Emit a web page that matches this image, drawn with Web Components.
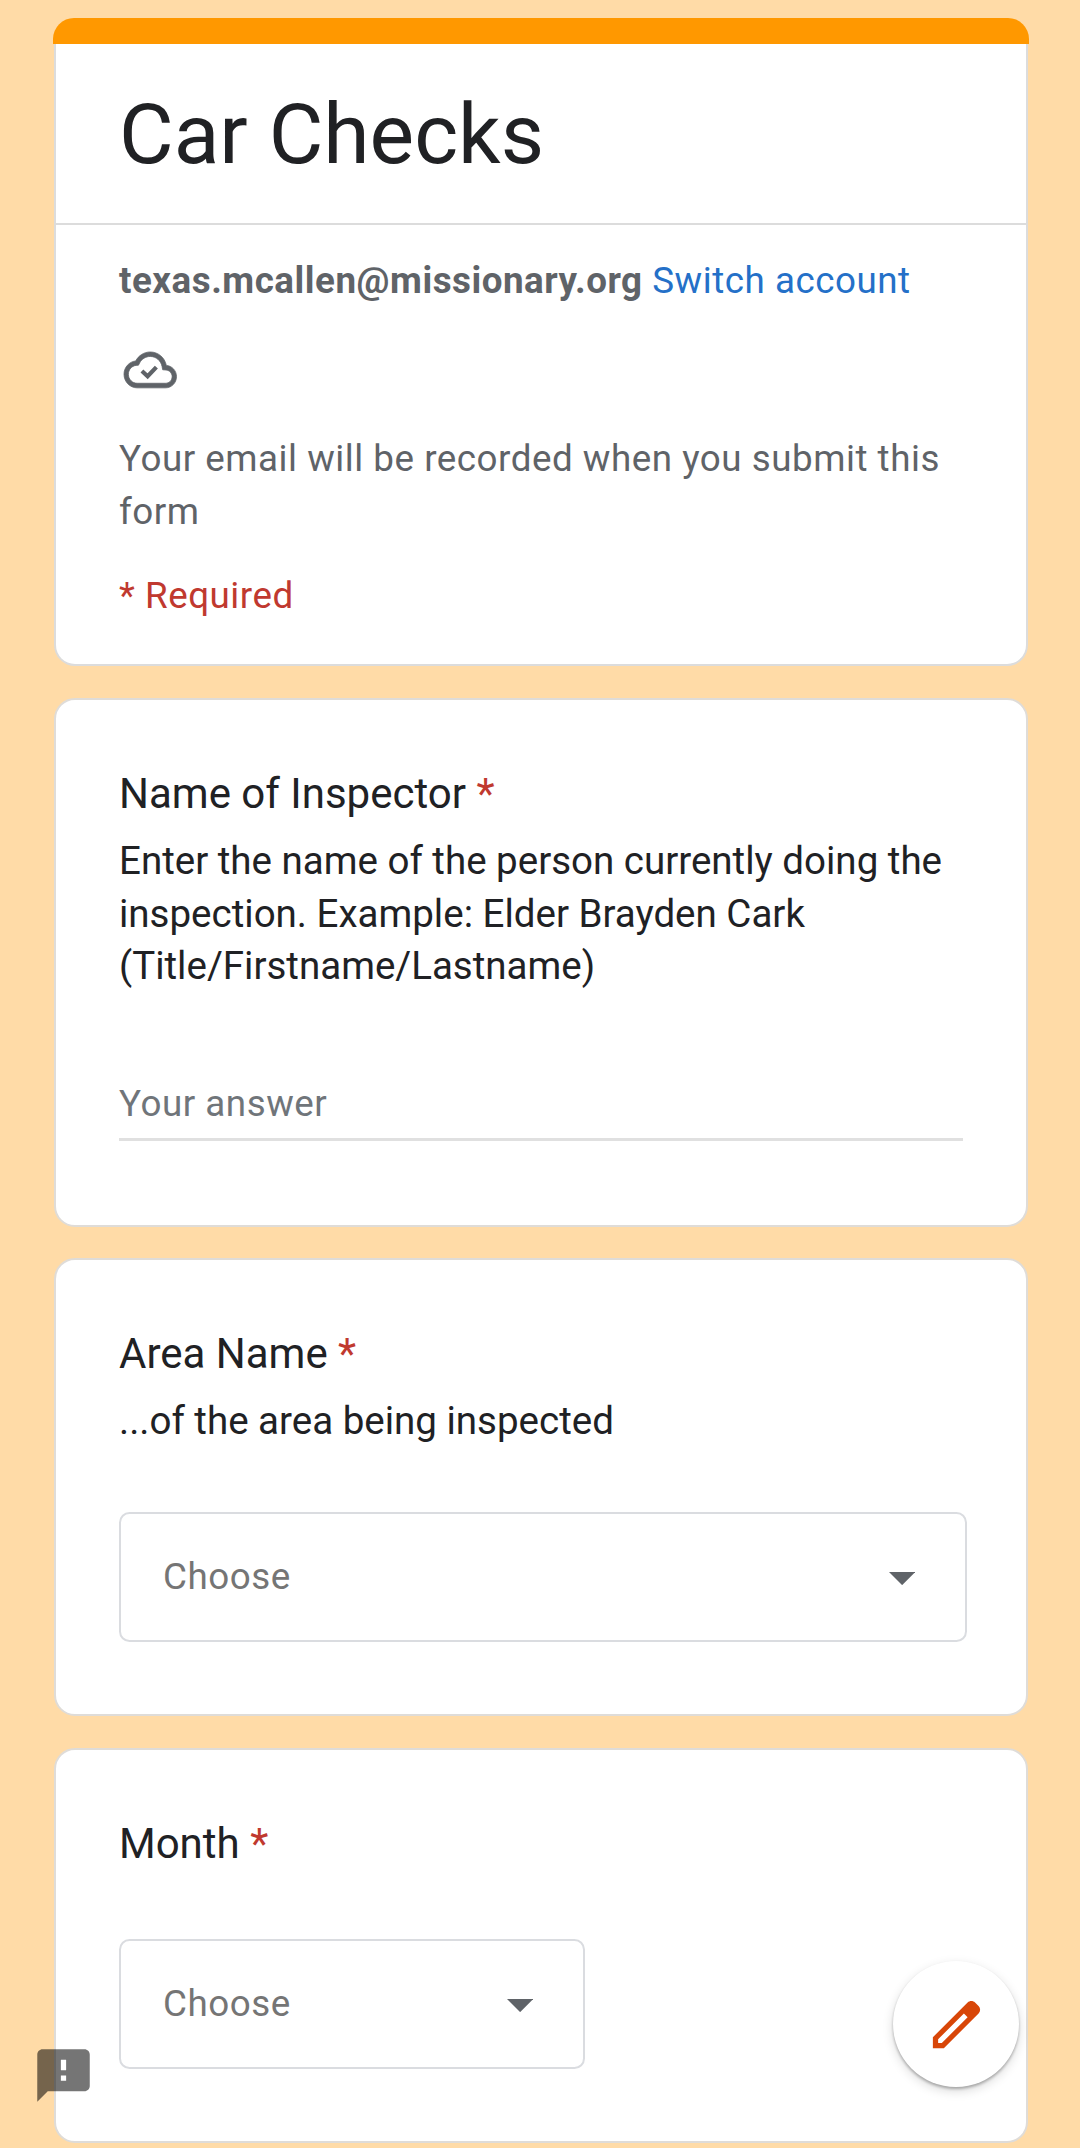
<!DOCTYPE html>
<html lang="en">
<head>
<meta charset="utf-8">
<title>Car Checks</title>
<style>
  html, body { margin: 0; height: 100%; overflow: hidden; }
  body { background: #ffdba7; font-family: Roboto, "Liberation Sans", sans-serif; color: #202124; }
</style>
</head>
<body>
<form-page>
  <form-header heading="Car Checks" email="texas.mcallen@missionary.org" action="Switch account" required-note="* Required">Your email will be recorded when you submit this form</form-header>
  <question-card style="height:529px" heading="Name of Inspector">
    <span slot="description">Enter the name of the person currently doing the inspection. Example: Elder Brayden Cark (Title/Firstname/Lastname)</span>
    <text-answer placeholder="Your answer"></text-answer>
  </question-card>
  <question-card style="height:458px;margin-top:-1px" heading="Area Name">
    <span slot="description">...of the area being inspected</span>
    <drop-down label="Choose" style="width:848px;margin-top:64.4px"></drop-down>
  </question-card>
  <question-card style="height:395px" heading="Month">
    <drop-down label="Choose" style="width:466px;margin-top:64px"></drop-down>
  </question-card>
</form-page>
<feedback-button></feedback-button>
<edit-fab></edit-fab>
<script>
  const define = (name, html) => customElements.define(name, class extends HTMLElement {
    constructor() {
      super();
      const t = document.createElement('template');
      t.innerHTML = html;
      this.attachShadow({ mode: 'open' }).appendChild(t.content.cloneNode(true));
    }
    connectedCallback() {
      this.shadowRoot.querySelectorAll('[data-attr]').forEach(el => {
        el.textContent = this.getAttribute(el.dataset.attr) || '';
      });
    }
  });

  define('form-page', `
    <style>
      :host { display: flex; flex-direction: column; gap: 32px; padding: 18px 52px 0 54px; box-sizing: border-box; }
    </style>
    <slot></slot>`);

  define('form-header', `
    <style>
      :host { display: block; height: 648px; box-sizing: border-box; font-size: 36.75px; line-height: 52.5px; letter-spacing: .525px; color: #5f6368; }
      .bar { height: 26px; margin: 0 -1px; background: #ff9800; border-radius: 21px 21px 0 0; }
      .body { height: 622px; box-sizing: border-box; background: #fff; border: 2px solid #dcdcdc; border-top: 0; border-radius: 0 0 21px 21px; }
      h1 { margin: 0; height: 179px; box-sizing: border-box; padding: 34px 63px 0; font-size: 84px; font-weight: 400; line-height: 113px; letter-spacing: 0; color: #202124; }
      .info { border-top: 2px solid #dcdcdc; padding: 30px 63px 0; }
      .account { white-space: nowrap; }
      b { font-weight: 700; }
      a { color: #2470c8; }
      svg { display: block; width: 52.5px; height: 52.5px; margin: 35.5px 0 37.5px 5px; fill: #5f6368; stroke: #5f6368; overflow: visible; }
      .req { margin-top: 32px; color: #c0392f; }
    </style>
    <div class="bar"></div>
    <div class="body">
      <h1 data-attr="heading"></h1>
      <div class="info">
        <div class="account"><b data-attr="email"></b> <a data-attr="action"></a></div>
        <svg viewBox="0 0 24 24"><path stroke-width=".35" d="M19.350 10.250C18.670 6.700 15.640 4.100 12 4.100 9.110 4.100 6.600 5.800 5.350 8.200 2.340 8.550 0 11.100 0 14.300c0 3.400 2.690 6.200 6 6.200h13c2.760 0 5-2.300 5-5.150 0-2.700-2.050-4.900-4.650-5.100zM19 18.400H6c-2.210 0-4-1.840-4-4.100 0-2.100 1.530-3.850 3.560-4.070l1.070-.11.5-.98C8.080 7.300 9.940 6.150 12 6.150c2.620 0 4.880 1.900 5.390 4.550l.3 1.540 1.530.11c1.560.1 2.780 1.450 2.780 3.030 0 1.700-1.350 3.020-3 3.020z"/><path fill="none" stroke-width="1.9" d="M8.200 12.800l2.600 2.400 4-4.200"/></svg>
        <div><slot></slot></div>
        <div class="req" data-attr="required-note"></div>
      </div>
    </div>`);

  define('question-card', `
    <style>
      :host { display: block; box-sizing: border-box; background: #fff; border: 2px solid #dfdcd8; border-radius: 21px; padding: 62px 63px 0; }
      h2 { margin: 0 0 10.1px; font-size: 42px; font-weight: 400; line-height: 63px; letter-spacing: 0; }
      i { font-style: normal; color: #c0392f; }
      .desc { font-size: 38.5px; line-height: 52.5px; }
    </style>
    <h2><span data-attr="heading"></span> <i>*</i></h2>
    <div class="desc"><slot name="description"></slot></div>
    <slot></slot>`);

  define('text-answer', `
    <style>
      :host { display: flex; align-items: flex-end; box-sizing: border-box; width: 844px; height: 148.4px; padding-bottom: 3px; border-bottom: 3px solid #e0e0e0; color: #70757a; font-size: 36.75px; line-height: 63px; letter-spacing: .525px; }
    </style>
    <span data-attr="placeholder"></span>`);

  define('drop-down', `
    <style>
      :host { display: flex; align-items: center; justify-content: space-between; box-sizing: border-box; height: 130px; border: 2px solid #dadce0; border-radius: 10.5px; padding: 0 50px 0 42px; color: #757575; font-size: 36.75px; line-height: 52.5px; letter-spacing: .525px; }
      svg { width: 26.25px; height: 13.125px; fill: #5f6368; margin-top: 2.5px; }
    </style>
    <span data-attr="label"></span>
    <svg viewBox="0 0 10 5"><path d="M0 0h10L5 5z"/></svg>`);

  define('feedback-button', `
    <style>
      :host { position: fixed; left: 32px; top: 2044px; width: 63px; height: 63px; }
      svg { display: block; width: 63px; height: 63px; fill: #000; opacity: .54; }
    </style>
    <svg viewBox="0 0 24 24"><path d="M20 2H4c-1.100 0-1.990.9-1.990 2L2 22l4-4h14c1.100 0 2-.9 2-2V4c0-1.100-.9-2-2-2zm-7 12h-2v-2h2v2zm0-4h-2V6h2v4z"/></svg>`);

  define('edit-fab', `
    <style>
      :host { position: fixed; left: 893px; top: 1961px; width: 126px; height: 126px; border-radius: 50%; background: #fff; display: flex; align-items: center; justify-content: center; box-shadow: 0 2px 3px rgba(0,0,0,.28), 0 4px 11px rgba(0,0,0,.15); }
      svg { width: 63px; height: 63px; fill: #d84608; }
    </style>
    <svg viewBox="0 0 24 24"><path d="M20.410 4.940l-1.350-1.350c-.78-.78-2.050-.78-2.830 0L3 16.820V21h4.180L20.410 7.770c.79-.78.79-2.050 0-2.830zm-14 14.120L5 19v-1.360l9.820-9.820 1.410 1.410-9.820 9.830z"/></svg>`);
</script>
</body>
</html>
